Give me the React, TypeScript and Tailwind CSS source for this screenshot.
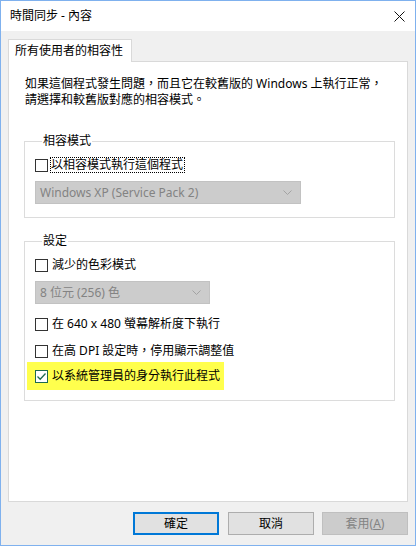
import React from "react";

const font = "font-['Noto_Sans','Noto_Sans_CJK_TC',sans-serif]";

function Box({ checked }: { checked?: boolean }) {
  return (
    <span
      className={`w-[13px] h-[13px] shrink-0 border bg-white flex items-center justify-center ${
        checked ? "border-[#1d6a4f]" : "border-[#333333]"
      }`}
    >
      {checked && (
        <svg width="11" height="11" viewBox="0 0 11 11">
          <path d="M1.5 5.5 L4.2 8.2 L9.5 2.5" fill="none" stroke="#1d6a4f" strokeWidth="1.3" />
        </svg>
      )}
    </span>
  );
}

function Row({ label, checked }: { label: string; checked?: boolean }) {
  return (
    <div className="h-[16px] flex items-center">
      <Box checked={checked} />
      <span className="ml-[4px] leading-[16px]">{label}</span>
    </div>
  );
}

function Select({ text, width }: { text: string; width: string }) {
  return (
    <div
      className={`${width} h-[23px] bg-[#cccccc] border border-[#c2c2c2] flex items-center justify-between pl-[4px] pr-[8px] text-[#838383]`}
    >
      <span className="leading-[16px]">{text}</span>
      <svg width="9" height="6" viewBox="0 0 9 6">
        <path d="M0.5 0.5 L4.5 4.5 L8.5 0.5" fill="none" stroke="#a3a3a3" strokeWidth="1" />
      </svg>
    </div>
  );
}

export default function App() {
  return (
    <div
      className={`${font} text-[12px] text-black w-[416px] h-[546px] border border-[#7fb1ee] flex flex-col bg-[#f0f0f0]`}
    >
      {/* title bar */}
      <div className="h-[30px] bg-white flex items-center justify-between pl-[9px] pr-[10px]">
        <span className="leading-[16px]">時間同步 - 內容</span>
        <svg width="11" height="11" viewBox="0 0 11 11">
          <path d="M0.5 0.5 L10.5 10.5 M10.5 0.5 L0.5 10.5" stroke="#111" strokeWidth="1" />
        </svg>
      </div>

      <div className="flex-1 flex flex-col px-[7px] pt-[8px] pb-[10px]">
        {/* tab */}
        <div className="relative z-10 w-[124px] h-[23px] bg-white border border-b-0 border-[#d9d9d9] pl-[6px] flex items-center">
          <span className="leading-[16px]">所有使用者的相容性</span>
        </div>

        {/* panel */}
        <div className="-mt-px flex-1 bg-white border border-[#d9d9d9] pt-[14px] pl-[15px] pr-[12px]">
          <p className="pl-[1px] leading-[16px]">
            如果這個程式發生問題，而且它在較舊版的 Windows 上執行正常，
            <br />
            請選擇和較舊版對應的相容模式。
          </p>

          <fieldset className="mt-[25px] border border-[#dcdcdc] px-[10px] pb-[13px]">
            <legend className="ml-[7px] px-[1px] leading-[16px]">相容模式</legend>
            <div className="mt-[8px] h-[16px] flex items-center">
              <Box />
              <span className="ml-[2px] border border-dotted border-black leading-[14px] pr-[1px]">
                以相容模式執行這個程式
              </span>
            </div>
            <div className="mt-[8px]">
              <Select text="Windows XP (Service Pack 2)" width="w-[266px]" />
            </div>
          </fieldset>

          <fieldset className="mt-[15px] border border-[#dcdcdc] px-[10px] pb-[10px]">
            <legend className="ml-[7px] px-[1px] leading-[16px]">設定</legend>
            <div className="mt-[8px]">
              <Row label="減少的色彩模式" />
            </div>
            <div className="mt-[8px]">
              <Select text="8 位元 (256) 色" width="w-[175px]" />
            </div>
            <div className="mt-[12px]">
              <Row label="在 640 x 480 螢幕解析度下執行" />
            </div>
            <div className="mt-[11px]">
              <Row label="在高 DPI 設定時，停用顯示調整值" />
            </div>
            <div className="mt-[3px] -ml-[8px] w-[197px] h-[28px] bg-[#ffff4d] pl-[8px] flex items-center">
              <Row label="以系統管理員的身分執行此程式" checked />
            </div>
          </fieldset>
        </div>

        {/* buttons */}
        <div className="mt-[10px] flex justify-end gap-[8px]">
          <button className="mr-[1px] w-[86px] h-[23px] bg-[#e1e1e1] border-2 border-[#0078d7] leading-[16px]">
            確定
          </button>
          <button className="w-[86px] h-[23px] bg-[#e1e1e1] border border-[#adadad] leading-[16px]">
            取消
          </button>
          <button className="w-[86px] h-[23px] bg-[#cccccc] border border-[#bfbfbf] text-[#838383] leading-[16px]">
            套用(<span className="underline">A</span>)
          </button>
        </div>
      </div>
    </div>
  );
}
